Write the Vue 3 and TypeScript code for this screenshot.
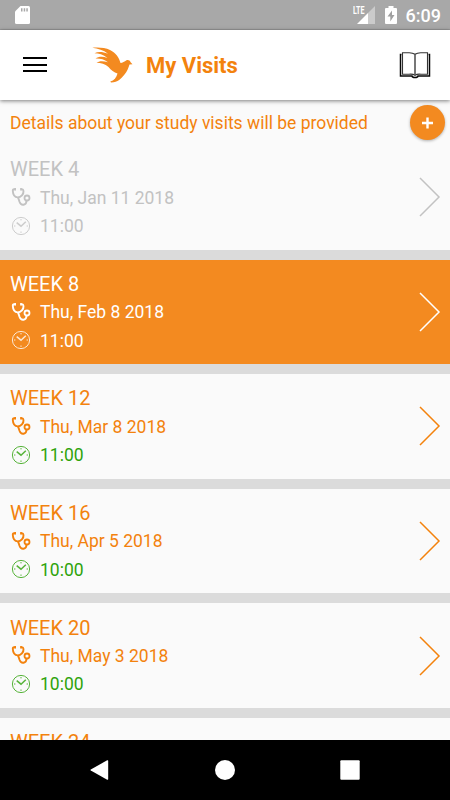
<script setup lang="ts">
interface Visit {
  week: number
  date: string
  time: string
  state: 'past' | 'current' | 'upcoming'
}

const visits: Visit[] = [
  { week: 4, date: 'Thu, Jan 11 2018', time: '11:00', state: 'past' },
  { week: 8, date: 'Thu, Feb 8 2018', time: '11:00', state: 'current' },
  { week: 12, date: 'Thu, Mar 8 2018', time: '11:00', state: 'upcoming' },
  { week: 16, date: 'Thu, Apr 5 2018', time: '10:00', state: 'upcoming' },
  { week: 20, date: 'Thu, May 3 2018', time: '10:00', state: 'upcoming' },
  { week: 24, date: '', time: '', state: 'upcoming' },
]
</script>

<template>
  <div class="screen">
    <div class="status-bar">
      <svg class="sd-card" width="15" height="18" viewBox="0 0 15 18">
        <path d="M5.5 0H13.5Q15 0 15 1.5V16.5Q15 18 13.500 18H1.500Q0 18 0 16.500V5.500Z" fill="#fff" />
        <path d="M6 2.200h1.500v3.300H6zM8.700 2.200h1.500v3.300H8.700zM11.300 2.200h1.500v3.300h-1.500z" fill="#a8a8a8" />
      </svg>
      <div class="status-right">
        <div class="signal">
          <span class="lte">LTE</span>
          <svg width="18" height="18" viewBox="0 0 18 18">
            <path d="M18 0V18H11V7Z" fill="#fff" opacity="0.4" />
            <path d="M11 7V18H0Z" fill="#fff" />
          </svg>
        </div>
        <svg class="battery" width="12" height="18" viewBox="0 0 12 18">
          <path d="M3.500 0h5v2H11q1 0 1 1V17q0 1-1 1H1q-1 0-1-1V3q0-1 1-1H3.500Z" fill="#fff" />
          <path d="M7 4.500L2.500 10.500H5.300V15.500L9.500 8.900H7Z" fill="#a0a0a0" />
        </svg>
        <span class="clock">6:09</span>
      </div>
    </div>

    <header class="toolbar">
      <button class="menu" aria-label="Menu"><i /><i /><i /></button>
      <svg class="bird" width="42" height="36" viewBox="0 0 42 36">
        <path
          d="M0.300 0.800C6 .2 13 .6 18 3C24 6 27 10.500 28.500 16C30.500 15.800 32.500 14.500 34.500 13.200C36.500 12.600 38 13.500 38.600 15.300L40.500 17.300L37.500 17.500C36.500 21 35 24.500 32.500 27.500C29 31.500 26 35.500 19 35.400L18.300 34.500C22 33.500 24.500 30.500 25.500 26.500C22 25.500 19 23 16.500 20C13 17 9 16 4.500 15.800C7 13.800 11 13.600 16 15.300C12 12.200 8 11.300 3.500 11.500C6.500 9.500 10.500 9.200 15.500 10.900C11 7.500 7 6.500 2.500 6.300C6 4.500 10.500 4.700 16 6.800C11.500 3 6 1.700 .3 .8Z"
          fill="#f38a20"
        />
      </svg>
      <h1>My Visits</h1>
      <svg class="book" width="32" height="28" viewBox="0 0 32 28" fill="none">
        <path d="M2.500 3.500H1.500V25H13Q13.300 26.500 16 26.500T19 25H30.500V3.500H29.500" stroke="#080808" stroke-width="1.500" />
        <path d="M16 3.300Q13.500 1.500 9.500 1.700H3.500V23.200H10Q14 22.800 16 24.200Q18 22.800 22 23.200H28.500V1.700H22.500Q18.500 1.500 16 3.300Z" stroke="#333" stroke-width="1.100" />
        <path d="M16 3V24.500" stroke="#555" stroke-width="1.600" />
      </svg>
    </header>

    <main class="content">
      <div class="notice">
        <p>Details about your study visits will be provided</p>
        <button class="add" aria-label="Add visit">
          <svg width="11" height="12" viewBox="0 0 11 12">
            <path d="M5.500 .5V11.500M0 6H11" stroke="#fff" stroke-width="2.400" />
          </svg>
        </button>
      </div>

      <section v-for="visit in visits" :key="visit.week" class="visit" :class="visit.state">
        <div class="details">
          <h2>WEEK {{ visit.week }}</h2>
          <div class="line date">
            <svg width="20" height="20" viewBox="0 0 20 20" fill="none" stroke="currentColor">
              <path d="M4.500 2.200H3Q1.800 2.200 1.800 4C2 7.800 4 10.200 6.700 10.400C10 10.400 12.800 7 12.500 4Q12.300 2.200 11 2.200H9.600" stroke-width="1.900" />
              <path d="M7 10.400Q8 13 8.600 15Q9.800 18.200 12.600 17.700C15 17.200 15.600 15.600 15.600 13.200" stroke-width="1.900" />
              <circle cx="16" cy="11" r="2.500" stroke-width="1.800" />
              <path d="M4.200 1v2.400M10 1v2.400" stroke-width="1.600" />
            </svg>
            <span>{{ visit.date }}</span>
          </div>
          <div class="line time">
            <svg width="20" height="20" viewBox="0 0 20 20" fill="none" stroke="currentColor">
              <circle cx="10" cy="10" r="8.600" stroke-width="1" />
              <path d="M5.700 6.700L10 10.200L14.800 5.700" stroke-width="1.500" />
              <path d="M10 3v1.400M10 15.500v1.400M3 10h1.400M15.600 10H17" stroke-width="1" />
            </svg>
            <span>{{ visit.time }}</span>
          </div>
        </div>
        <svg class="chevron" width="22" height="40" viewBox="0 0 22 40" fill="none">
          <path d="M1 1L20 20L1 39" stroke="currentColor" stroke-width="1.500" />
        </svg>
      </section>
    </main>

    <nav class="nav-bar">
      <svg width="20" height="20" viewBox="0 0 20 20">
        <path d="M17.200 .3Q18.200 0 18.200 1V19Q18.200 20 17.200 19.700L.8 10.600Q0 10 .8 9.400Z" fill="#fff" />
      </svg>
      <svg width="20" height="20" viewBox="0 0 20 20"><circle cx="10" cy="10" r="10" fill="#fff" /></svg>
      <svg width="20" height="20" viewBox="0 0 20 20"><rect x=".3" y=".3" width="19.400" height="19.400" rx="1" fill="#fff" /></svg>
    </nav>
  </div>
</template>

<style>
body {
  margin: 0;
  overflow: hidden;
}
</style>

<style scoped>
.screen {
  display: flex;
  flex-direction: column;
  width: 450px;
  height: 800px;
  overflow: hidden;
  background: #fafafa;
  font-family: Roboto, sans-serif;
}
svg {
  display: block;
  flex: none;
}
h1, h2, p {
  margin: 0;
  font-weight: 400;
}
button {
  padding: 0;
  border: 0;
  background: none;
}
.status-bar {
  display: flex;
  flex: none;
  justify-content: space-between;
  box-sizing: border-box;
  height: 30px;
  padding: 6px 10px 0 15px;
  background: #a8a8a8;
  border-bottom: 1px solid #999;
  color: #fff;
}
.status-right {
  display: flex;
}
.signal {
  display: flex;
  width: 22px;
  justify-content: flex-end;
  position: relative;
}
.lte {
  position: absolute;
  left: 0;
  top: -1px;
  font-size: 10.500px;
  line-height: 11px;
  font-weight: 700;
  transform: scaleX(0.68);
  transform-origin: left;
}
.battery {
  margin-left: 10px;
}
.clock {
  margin-left: 9px;
  margin-right: -1px;
  font-size: 18px;
  line-height: 20px;
  font-weight: 500;
}
.toolbar {
  display: flex;
  flex: none;
  align-items: center;
  box-sizing: border-box;
  height: 70px;
  padding: 0 19px 0 23px;
  background: #fff;
  box-shadow: 0 1px 4px rgba(0, 0, 0, 0.5);
  z-index: 1;
}
.menu {
  display: flex;
  flex-direction: column;
  gap: 4.500px;
  width: 24px;
  margin-bottom: 1px;
}
.menu i {
  height: 2px;
  background: #000;
}
.bird {
  margin-left: 45px;
}
h1 {
  flex: 1;
  margin-left: 12px;
  padding-top: 2px;
  color: #f3820d;
  font-size: 22px;
  line-height: 26px;
  font-weight: 700;
}
.content {
  flex: 1;
  min-height: 0;
  overflow: hidden;
}
.notice {
  display: flex;
  align-items: center;
  justify-content: space-between;
  height: 45px;
  padding: 0 5px 0 10px;
}
.notice p {
  color: #f3820d;
  font-size: 17.500px;
}
.add {
  display: flex;
  align-items: center;
  justify-content: center;
  width: 35px;
  height: 35px;
  border-radius: 50%;
  background: #f38a20;
  box-shadow: 0 1px 3px rgba(0, 0, 0, 0.3);
}
.visit {
  display: flex;
  justify-content: space-between;
  align-items: center;
  box-sizing: border-box;
  height: 114.600px;
  padding: 0 9px 0 10px;
  border-bottom: 10px solid #dbdbdb;
}
.details {
  display: flex;
  flex-direction: column;
  padding-top: 1px;
}
h2 {
  font-size: 20px;
  line-height: 28px;
}
.line {
  display: flex;
  align-items: center;
  gap: 9px;
  height: 28.600px;
  padding-left: 1px;
  font-size: 17.500px;
}
.line svg {
  margin-bottom: 1px;
}
.past {
  color: #c2c2c2;
}
.current {
  background: #f38a20;
  color: #fff;
}
.upcoming {
  color: #f3820d;
}
.upcoming .time {
  color: #2fa30b;
}
.time svg {
  opacity: 0.8;
}
.nav-bar {
  display: flex;
  flex: none;
  align-items: center;
  justify-content: center;
  gap: 105px;
  height: 60px;
  background: #000;
}
</style>
